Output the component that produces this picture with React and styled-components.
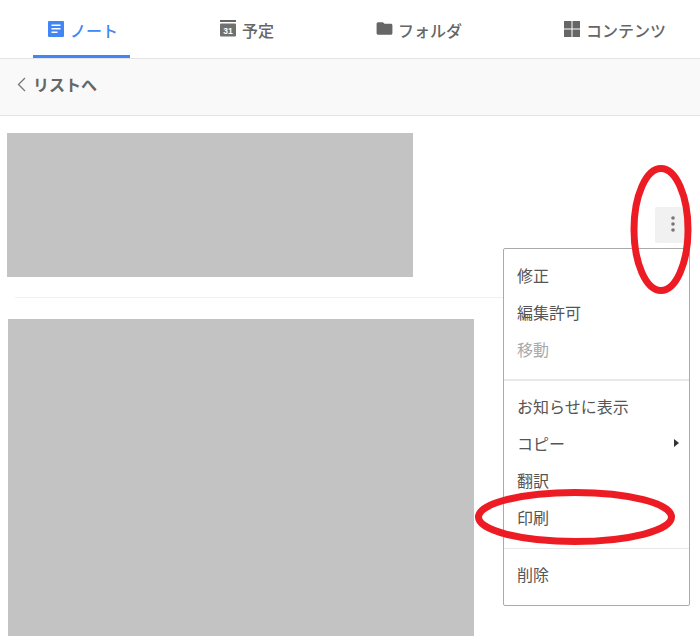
import styled, { createGlobalStyle } from "styled-components";
import { MdFolder } from "react-icons/md";

const GlobalStyle = createGlobalStyle`
  html, body { margin: 0; padding: 0; background: #fff; }
  body { font-family: "Noto Sans CJK JP", "Noto Sans", "Liberation Sans", sans-serif; }
`;

const Page = styled.div`
  position: relative;
  width: 700px;
  height: 636px;
  overflow: hidden;
`;

const TabBar = styled.nav`
  display: flex;
  height: 58px;
  padding-left: 33px;
  gap: 75px;
  border-bottom: 1px solid #e3e3e3;
`;

const Tab = styled.div`
  display: flex;
  align-items: center;
  gap: 6px;
  height: 58px;
  padding: 5px 12px 0 15px;
  box-sizing: border-box;
  font-size: 16px;
  font-weight: 500;
  white-space: nowrap;
  color: ${(p) => (p.$active ? "#4285f4" : "#666")};
  border-bottom: 3px solid ${(p) => (p.$active ? "#4285f4" : "transparent")};
`;

const TabIcon = styled.span`
  display: flex;
  align-items: center;
  justify-content: center;
  width: 16px;
  height: 16px;
  margin-top: -3px;
  svg { flex: none; }
`;

const BackBar = styled.div`
  display: flex;
  align-items: center;
  height: 50px;
  padding: 0 0 6px 17px;
  gap: 7px;
  background: #f9f9f9;
  border-bottom: 1px solid #e3e3e3;
  font-size: 16px;
  font-weight: 700;
  color: #666;
`;

const Content = styled.main`
  padding: 17px 10px 0 7px;
`;

const TitleRow = styled.div`
  display: flex;
  justify-content: space-between;
  align-items: flex-end;
`;

const Placeholder = styled.div`
  background: #c3c3c3;
  width: ${(p) => p.$w}px;
  height: ${(p) => p.$h}px;
  margin-left: ${(p) => p.$ml || 0}px;
  flex: none;
`;

const MoreButton = styled.button`
  display: flex;
  align-items: center;
  justify-content: center;
  width: 35px;
  height: 36px;
  padding: 0 0 2px;
  margin-bottom: 34px;
  border: 0;
  border-radius: 2px;
  background: #f1f1f1;
`;

const Divider = styled.hr`
  margin: 20px 0 21px 8px;
  border: 0;
  border-top: 1px solid #f0f0f0;
`;

const Menu = styled.div`
  position: absolute;
  left: 503px;
  top: 248px;
  width: 187px;
  height: 358px;
  box-sizing: border-box;
  padding: 7px 0 0;
  background: #fff;
  border: 1px solid #aaa;
  border-radius: 2px;
`;

const MenuItem = styled.div`
  display: flex;
  align-items: center;
  justify-content: space-between;
  height: 37px;
  padding: 0 12px 0 13px;
  font-size: 16px;
  color: ${(p) => (p.$disabled ? "#aaa" : "#555")};
`;

const MenuRule = styled.div`
  height: ${(p) => (p.$thin ? 1 : 2)}px;
  margin: ${(p) => (p.$thin ? 13 : 12)}px 0 6px;
  background: #e8e8e8;
`;

const Caret = styled.span`
  width: 0;
  height: 0;
  margin-right: -2px;
  border-left: 5px solid #333;
  border-top: 4px solid transparent;
  border-bottom: 4px solid transparent;
`;

const Annotation = styled.svg`
  position: absolute;
  left: 0;
  top: 0;
  pointer-events: none;
`;

const NoteIcon = () => (
  <svg width="16" height="16" viewBox="0 0 16 16">
    <path
      fill="#4285f4"
      fillRule="evenodd"
      d="M1 0h14a1 1 0 0 1 1 1v14a1 1 0 0 1-1 1H1a1 1 0 0 1-1-1V1a1 1 0 0 1 1-1zM3.5 3.5v1.5h9V3.5zM3.5 7v1.5h9V7zM3.5 10.5V12h6v-1.5z"
    />
  </svg>
);

const CalendarIcon = () => (
  <svg width="16" height="17" viewBox="0 0 16 17">
    <rect x="0" y="0" width="16" height="2" fill="#666" />
    <rect x="0" y="3.5" width="16" height="13" rx="1" fill="#707070" />
    <text x="8" y="13.5" textAnchor="middle" fontSize="8.5" fontWeight="700" fontFamily="Liberation Sans, sans-serif" fill="#fff">31</text>
  </svg>
);

const GridIcon = () => (
  <svg width="16" height="16" viewBox="0 0 16 16" fill="#666">
    <rect x="0" y="0" width="7.5" height="7.5" />
    <rect x="8.5" y="0" width="7.5" height="7.5" />
    <rect x="0" y="8.5" width="7.5" height="7.5" />
    <rect x="8.5" y="8.5" width="7.5" height="7.5" />
  </svg>
);

const ChevronIcon = () => (
  <svg width="9" height="15" viewBox="0 0 9 15">
    <polyline points="8,1 1.5,7.5 8,14" fill="none" stroke="#777" strokeWidth="1.3" />
  </svg>
);

const KebabIcon = () => (
  <svg width="4" height="16" viewBox="0 0 4 16">
    <circle cx="2" cy="2" r="1.8" fill="#777" />
    <circle cx="2" cy="8" r="1.8" fill="#777" />
    <circle cx="2" cy="14" r="1.8" fill="#777" />
  </svg>
);

export default function App() {
  return (
    <Page>
      <GlobalStyle />
      <TabBar>
        <Tab $active><TabIcon><NoteIcon /></TabIcon>ノート</Tab>
        <Tab><TabIcon><CalendarIcon /></TabIcon>予定</Tab>
        <Tab><TabIcon><MdFolder size={19} /></TabIcon>フォルダ</Tab>
        <Tab><TabIcon><GridIcon /></TabIcon>コンテンツ</Tab>
      </TabBar>
      <BackBar>
        <ChevronIcon />
        リストへ
      </BackBar>
      <Content>
        <TitleRow>
          <Placeholder $w={406} $h={144} />
          <MoreButton><KebabIcon /></MoreButton>
        </TitleRow>
        <Divider />
        <Placeholder $w={466} $h={330} $ml={1} />
      </Content>
      <Menu>
        <MenuItem>修正</MenuItem>
        <MenuItem>編集許可</MenuItem>
        <MenuItem $disabled>移動</MenuItem>
        <MenuRule />
        <MenuItem>お知らせに表示</MenuItem>
        <MenuItem>コピー<Caret /></MenuItem>
        <MenuItem>翻訳</MenuItem>
        <MenuItem>印刷</MenuItem>
        <MenuRule $thin />
        <MenuItem>削除</MenuItem>
      </Menu>
      <Annotation width="700" height="636">
        <ellipse cx="661" cy="229.5" rx="27" ry="61" fill="none" stroke="#ed1c24" strokeWidth="7" />
        <ellipse cx="575" cy="517" rx="96.5" ry="24.5" fill="none" stroke="#ed1c24" strokeWidth="7" />
      </Annotation>
    </Page>
  );
}
